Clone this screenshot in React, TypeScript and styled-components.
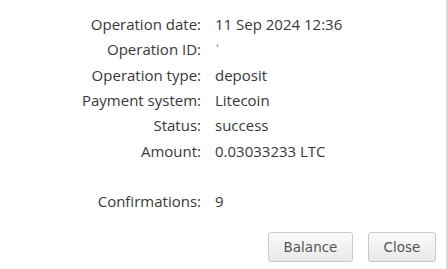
import styled, { createGlobalStyle } from 'styled-components'

const GlobalStyle = createGlobalStyle`
  html, body {
    margin: 0;
    padding: 0;
    background: #ffffff;
  }
`

const Dialog = styled.div`
  width: 447px;
  height: 269px;
  box-sizing: border-box;
  border-right: 1px solid #dcdcdc;
  background: #fff;
  display: flex;
  flex-direction: column;
  padding-top: 11.5px;
`

const Details = styled.div`
  display: grid;
  grid-template-columns: 201px 1fr;
  grid-auto-rows: 25.3px;
  column-gap: 14px;
  font-family: 'Open Sans', sans-serif;
  font-size: 15px;
  color: #383838;
  align-items: center;
`

const Label = styled.div`
  text-align: right;
  white-space: nowrap;
`

const Value = styled.div`
  white-space: nowrap;
`

const Footer = styled.div`
  margin-top: auto;
  display: flex;
  justify-content: flex-end;
  gap: 15px;
  padding: 0 10px 7px 0;
`

const Button = styled.button<{ wide?: boolean }>`
  height: 30px;
  width: ${p => (p.wide ? '85px' : '68px')};
  border: 1px solid #c8c8c8;
  border-radius: 3px;
  background: linear-gradient(#fafafa, #e9e9e9);
  font-family: 'DejaVu Sans', Verdana, sans-serif;
  font-size: 13.5px;
  color: #555;
  padding: 0;
  cursor: pointer;
`

const rows: [string, string][] = [
  ['Operation date:', '11 Sep 2024 12:36'],
  ['Operation ID:', '\u02bf'],
  ['Operation type:', 'deposit'],
  ['Payment system:', 'Litecoin'],
  ['Status:', 'success'],
  ['Amount:', '0.03033233 LTC'],
  ['', ''],
  ['Confirmations:', '9'],
]

export default function App() {
  return (
    <>
      <GlobalStyle />
      <Dialog>
        <Details>
          {rows.map(([label, value], i) => (
            <>
              <Label key={'l' + i}>{label}</Label>
              <Value key={'v' + i}>{value}</Value>
            </>
          ))}
        </Details>
        <Footer>
          <Button wide>Balance</Button>
          <Button>Close</Button>
        </Footer>
      </Dialog>
    </>
  )
}
